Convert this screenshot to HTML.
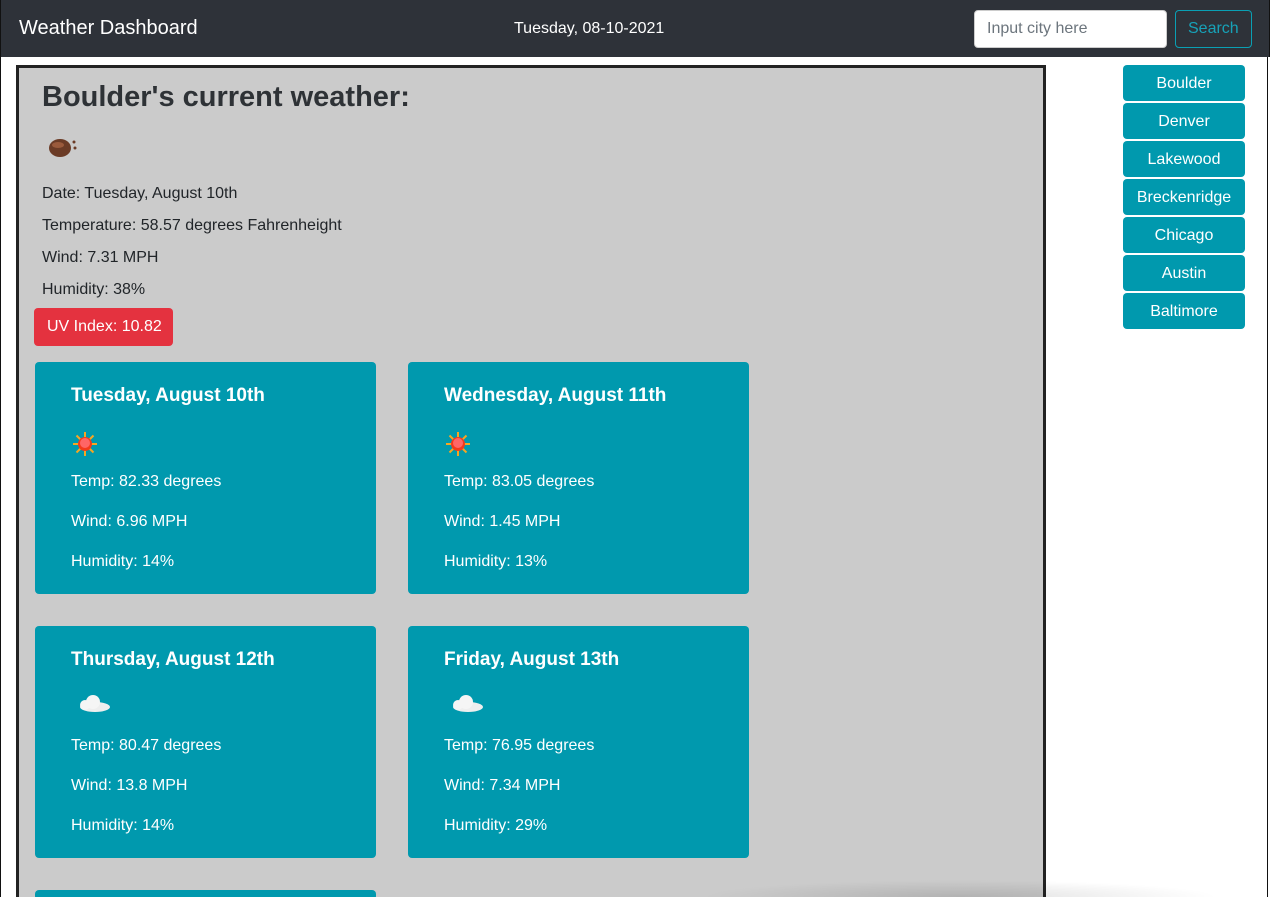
<!DOCTYPE html>
<html style="overflow:hidden;width:1270px;height:897px"><head><meta charset="utf-8"><style>
*{box-sizing:border-box;margin:0;padding:0}
body{width:1270px;height:897px;overflow:hidden;background:#fff;font-family:"Liberation Sans",sans-serif;position:relative;color:#212529}
.nav{position:absolute;left:0;top:0;width:1270px;height:57px;background:#2e3239;border-left:1px solid #111;border-right:1px solid #111}
.brand{position:absolute;left:18px;top:17px;color:#fff;font-size:20px}
.date{position:absolute;left:513px;top:20px;color:#fff;font-size:16px}
.inp{position:absolute;left:973px;top:10px;width:193px;height:38px;background:#fff;border:1px solid #ccc;border-radius:4px;color:#6c757d;font-size:16px;padding:9px 12px}
.sbtn{position:absolute;left:1174px;top:10px;width:77px;height:38px;border:1px solid #0aa0b4;border-radius:4px;color:#17a2b8;font-size:16px;padding:9px 12px}
.main{position:absolute;left:16px;top:65px;width:1030px;height:832px;background:#cbcbcb;border:3px solid #222;border-bottom:none;overflow:hidden}
h1{position:absolute;left:23px;top:13px;font-size:29px;font-weight:bold;color:#2e3236;white-space:nowrap}
.p{position:absolute;left:23px;font-size:16px;white-space:nowrap}
.uv{position:absolute;left:15px;top:240px;width:139px;height:38px;background:#e4323f;border-radius:4px;color:#fff;font-size:16px;padding:10px 13px;white-space:nowrap}
.card{position:absolute;width:341px;height:232px;background:#0099ae;border-radius:4px;color:#fff}
.card h5{position:absolute;left:36px;top:23px;font-size:19px;font-weight:bold;white-space:nowrap}
.card div{position:absolute;left:36px;font-size:16px;white-space:nowrap}
.side{position:absolute;left:1123px;width:122px;height:36px;background:#0099ae;border-radius:4px;color:#fff;font-size:16px;text-align:center;line-height:38px}
.sh{position:absolute;left:700px;top:880px;width:520px;height:17px;background:radial-gradient(ellipse at 50% 100%,rgba(0,0,0,.12),rgba(0,0,0,0) 70%)}
</style></head><body>
<div class="nav"><div class="brand">Weather Dashboard</div><div class="date">Tuesday, 08-10-2021</div>
<div class="inp">Input city here</div><div class="sbtn">Search</div></div>
<div class="main">
<h1>Boulder's current weather:</h1>
<div class="p" style="top:68px;left:29px"><svg width="32" height="22"><ellipse cx="12" cy="12" rx="11" ry="9" fill="#6b3b26"/><ellipse cx="10" cy="9" rx="6" ry="3" fill="#9a5a3c"/><circle cx="26" cy="6" r="1.5" fill="#6b3b26"/><circle cx="27" cy="12" r="1.5" fill="#6b3b26"/></svg></div>
<div class="p" style="top:117px">Date: Tuesday, August 10th</div>
<div class="p" style="top:149px">Temperature: 58.57 degrees Fahrenheight</div>
<div class="p" style="top:181px">Wind: 7.31 MPH</div>
<div class="p" style="top:213px">Humidity: 38%</div>
<div class="uv">UV Index: 10.82</div>
<div class="card" style="left:16px;top:294px"><h5>Tuesday, August 10th</h5><div style="top:68px"><svg width="28" height="28"><g stroke="#f5a623" stroke-width="2"><path d="M14 2v24M2 14h24M5.5 5.5l17 17M22.5 5.5l-17 17"/></g><circle cx="14" cy="14" r="7" fill="#f33a1c"/><circle cx="14" cy="13" r="5" fill="#f66"/></svg></div><div style="top:111px">Temp: 82.33 degrees</div><div style="top:151px">Wind: 6.96 MPH</div><div style="top:191px">Humidity: 14%</div></div>
<div class="card" style="left:389px;top:294px"><h5>Wednesday, August 11th</h5><div style="top:68px"><svg width="28" height="28"><g stroke="#f5a623" stroke-width="2"><path d="M14 2v24M2 14h24M5.5 5.5l17 17M22.5 5.5l-17 17"/></g><circle cx="14" cy="14" r="7" fill="#f33a1c"/><circle cx="14" cy="13" r="5" fill="#f66"/></svg></div><div style="top:111px">Temp: 83.05 degrees</div><div style="top:151px">Wind: 1.45 MPH</div><div style="top:191px">Humidity: 13%</div></div>
<div class="card" style="left:16px;top:558px"><h5>Thursday, August 12th</h5><div style="top:64px"><svg width="40" height="24"><ellipse cx="24" cy="17" rx="15" ry="5" fill="#eee"/><circle cx="22" cy="12" r="7" fill="#f5f5f5"/><circle cx="14" cy="15" r="5" fill="#f5f5f5"/></svg></div><div style="top:111px">Temp: 80.47 degrees</div><div style="top:151px">Wind: 13.8 MPH</div><div style="top:191px">Humidity: 14%</div></div>
<div class="card" style="left:389px;top:558px"><h5>Friday, August 13th</h5><div style="top:64px"><svg width="40" height="24"><ellipse cx="24" cy="17" rx="15" ry="5" fill="#eee"/><circle cx="22" cy="12" r="7" fill="#f5f5f5"/><circle cx="14" cy="15" r="5" fill="#f5f5f5"/></svg></div><div style="top:111px">Temp: 76.95 degrees</div><div style="top:151px">Wind: 7.34 MPH</div><div style="top:191px">Humidity: 29%</div></div>
<div class="card" style="left:16px;top:822px;height:10px"></div>
</div>
<div class="side" style="top:65px">Boulder</div>
<div class="side" style="top:103px">Denver</div>
<div class="side" style="top:141px">Lakewood</div>
<div class="side" style="top:179px">Breckenridge</div>
<div class="side" style="top:217px">Chicago</div>
<div class="side" style="top:255px">Austin</div>
<div class="side" style="top:293px">Baltimore</div>
<div class="sh"></div>
<div style="position:absolute;left:0;top:0;width:1px;height:897px;background:#111"></div>
<div style="position:absolute;left:1267px;top:57px;width:3px;height:840px;background:#fff;border-left:1px solid #111"></div>
</body></html>
